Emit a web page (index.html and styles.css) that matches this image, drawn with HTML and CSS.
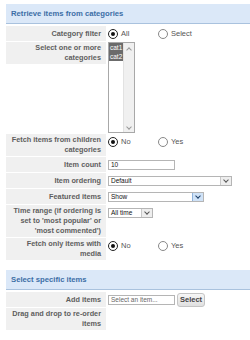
FILE: index.html
```html
<!DOCTYPE html>
<html lang="en">
  <head>
    <meta charset="UTF-8" />
    <meta name="viewport" content="width=device-width, initial-scale=1.0" />
    <title>Module parameters</title>
    <link rel="stylesheet" href="styles.css">
  </head>
  <body>
    <div class="panel">
      <h3 class="section-title">Retrieve items from categories</h3>

      <div class="param">
        <label class="param-label">Category filter</label>
        <div class="param-field">
          <span class="radio-opt"><span class="radio checked"></span>All</span>
          <span class="radio-opt"><span class="radio"></span>Select</span>
        </div>
      </div>

      <div class="param">
        <label class="param-label">Select one or more categories</label>
        <div class="param-field">
          <div class="listbox">
            <div class="listbox-items">
              <div class="listbox-item">cat1</div>
              <div class="listbox-item">cat2</div>
            </div>
            <div class="listbox-scroll">
              <span class="chev up"></span>
              <span class="chev"></span>
            </div>
          </div>
        </div>
      </div>

      <div class="param">
        <label class="param-label">Fetch items from children categories</label>
        <div class="param-field">
          <span class="radio-opt"><span class="radio checked"></span>No</span>
          <span class="radio-opt"><span class="radio"></span>Yes</span>
        </div>
      </div>

      <div class="param">
        <label class="param-label">Item count</label>
        <div class="param-field">
          <div class="text-input">10</div>
        </div>
      </div>

      <div class="param">
        <label class="param-label">Item ordering</label>
        <div class="param-field">
          <div class="dropdown dropdown-wide">
            <span class="dropdown-value">Default</span>
            <span class="dropdown-btn"><span class="chev"></span></span>
          </div>
        </div>
      </div>

      <div class="param">
        <label class="param-label">Featured items</label>
        <div class="param-field">
          <div class="dropdown dropdown-mid">
            <span class="dropdown-value">Show</span>
            <span class="dropdown-btn hover"><span class="chev"></span></span>
          </div>
        </div>
      </div>

      <div class="param">
        <label class="param-label">Time range (if ordering is set to 'most popular' or 'most commented')</label>
        <div class="param-field">
          <div class="dropdown dropdown-small">
            <span class="dropdown-value">All time</span>
            <span class="dropdown-btn"><span class="chev"></span></span>
          </div>
        </div>
      </div>

      <div class="param">
        <label class="param-label">Fetch only items with media</label>
        <div class="param-field">
          <span class="radio-opt"><span class="radio checked"></span>No</span>
          <span class="radio-opt"><span class="radio"></span>Yes</span>
        </div>
      </div>

      <h3 class="section-title second">Select specific items</h3>

      <div class="param">
        <label class="param-label">Add items</label>
        <div class="param-field">
          <div class="text-input placeholder">Select an item...</div>
          <button class="btn">Select</button>
        </div>
      </div>

      <div class="param">
        <label class="param-label">Drag and drop to re-order items</label>
        <div class="param-field"></div>
      </div>
    </div>
  </body>
</html>
```

FILE: styles.css
```css
body {
  font-family: "Liberation Sans", Arial, sans-serif;
  background: #fff;
  margin: 0;
  padding: 4px 0 0 6px;
}
.panel {
  display: flex;
  flex-direction: column;
  gap: 1px;
}
.section-title {
  margin: 0 0 1px;
  height: 19px;
  padding-left: 5px;
  display: flex;
  align-items: center;
  background: #dbe8f8;
  border-bottom: 1px solid #a9c2de;
  color: #3c6ea6;
  font-size: 7.7px;
  font-weight: 700;
}
.section-title.second {
  margin-top: 9px;
}
.param {
  display: flex;
  align-items: flex-start;
  gap: 2px;
}
.param-label {
  width: 100px;
  min-height: 15px;
  box-sizing: border-box;
  padding: 1px 5px 1px 2px;
  display: flex;
  align-items: center;
  justify-content: flex-end;
  background: #f0f0f0;
  color: #5e5e5e;
  font-size: 7.3px;
  font-weight: 700;
  line-height: 10px;
  text-align: right;
}
.param-field {
  display: flex;
  align-items: center;
  min-height: 15px;
  color: #555;
  font-size: 7.5px;
}
.radio-opt {
  display: flex;
  align-items: center;
  width: 50px;
}
.radio {
  width: 8px;
  height: 8px;
  margin-right: 3px;
  border: 1px solid #888;
  border-radius: 50%;
  background: #fff;
  position: relative;
}
.radio.checked {
  border-color: #222;
}
.radio.checked::after {
  content: "";
  position: absolute;
  left: 2px;
  top: 2px;
  width: 4px;
  height: 4px;
  border-radius: 50%;
  background: #111;
}
.listbox {
  display: flex;
  width: 27px;
  height: 91px;
  box-sizing: border-box;
  border: 1px solid #a8a8a8;
}
.listbox-items {
  flex: 1;
}
.listbox-item {
  background: #6b6b6b;
  color: #fff;
  font-size: 6.5px;
  line-height: 9px;
  padding-left: 1px;
}
.listbox-scroll {
  width: 10px;
  background: #f0f0f0;
  border-left: 1px solid #e2e2e2;
  display: flex;
  flex-direction: column;
  justify-content: space-between;
  align-items: center;
  padding: 3px 0;
}
.chev {
  width: 3px;
  height: 3px;
  border-right: 1px solid #999;
  border-bottom: 1px solid #999;
  transform: rotate(45deg);
}
.chev.up {
  transform: rotate(-135deg);
  margin-top: 2px;
}
.text-input {
  width: 67px;
  height: 10px;
  box-sizing: border-box;
  border: 1px solid #b5b5b5;
  padding-left: 2px;
  color: #111;
  font-size: 6.5px;
  line-height: 8px;
}
.text-input.placeholder {
  color: #666;
}
.dropdown {
  display: flex;
  height: 10px;
  box-sizing: border-box;
  border: 1px solid #b5b5b5;
  background: #fff;
}
.dropdown-wide {
  width: 124px;
}
.dropdown-mid {
  width: 96px;
}
.dropdown-small {
  width: 45px;
}
.dropdown-value {
  flex: 1;
  padding-left: 2px;
  color: #111;
  font-size: 6.5px;
  line-height: 8px;
}
.dropdown-btn {
  width: 10px;
  display: flex;
  justify-content: center;
  align-items: center;
  background: #eee;
  border-left: 1px solid #c8c8c8;
}
.dropdown-btn .chev {
  margin-top: -2px;
  border-color: #555;
}
.dropdown-btn.hover {
  background: #cfe2f7;
  border-left-color: #8fb3dc;
}
.dropdown-btn.hover .chev {
  border-color: #1c3e66;
  border-width: 0 1.5px 1.5px 0;
}
.btn {
  margin-left: 2px;
  height: 14px;
  padding: 0 2px;
  border: 1px solid #c4c4c4;
  border-radius: 3px;
  background: linear-gradient(#f6f6f6, #e0e0e0);
  color: #444;
  font-family: inherit;
  font-size: 7.5px;
  font-weight: 700;
}
```
